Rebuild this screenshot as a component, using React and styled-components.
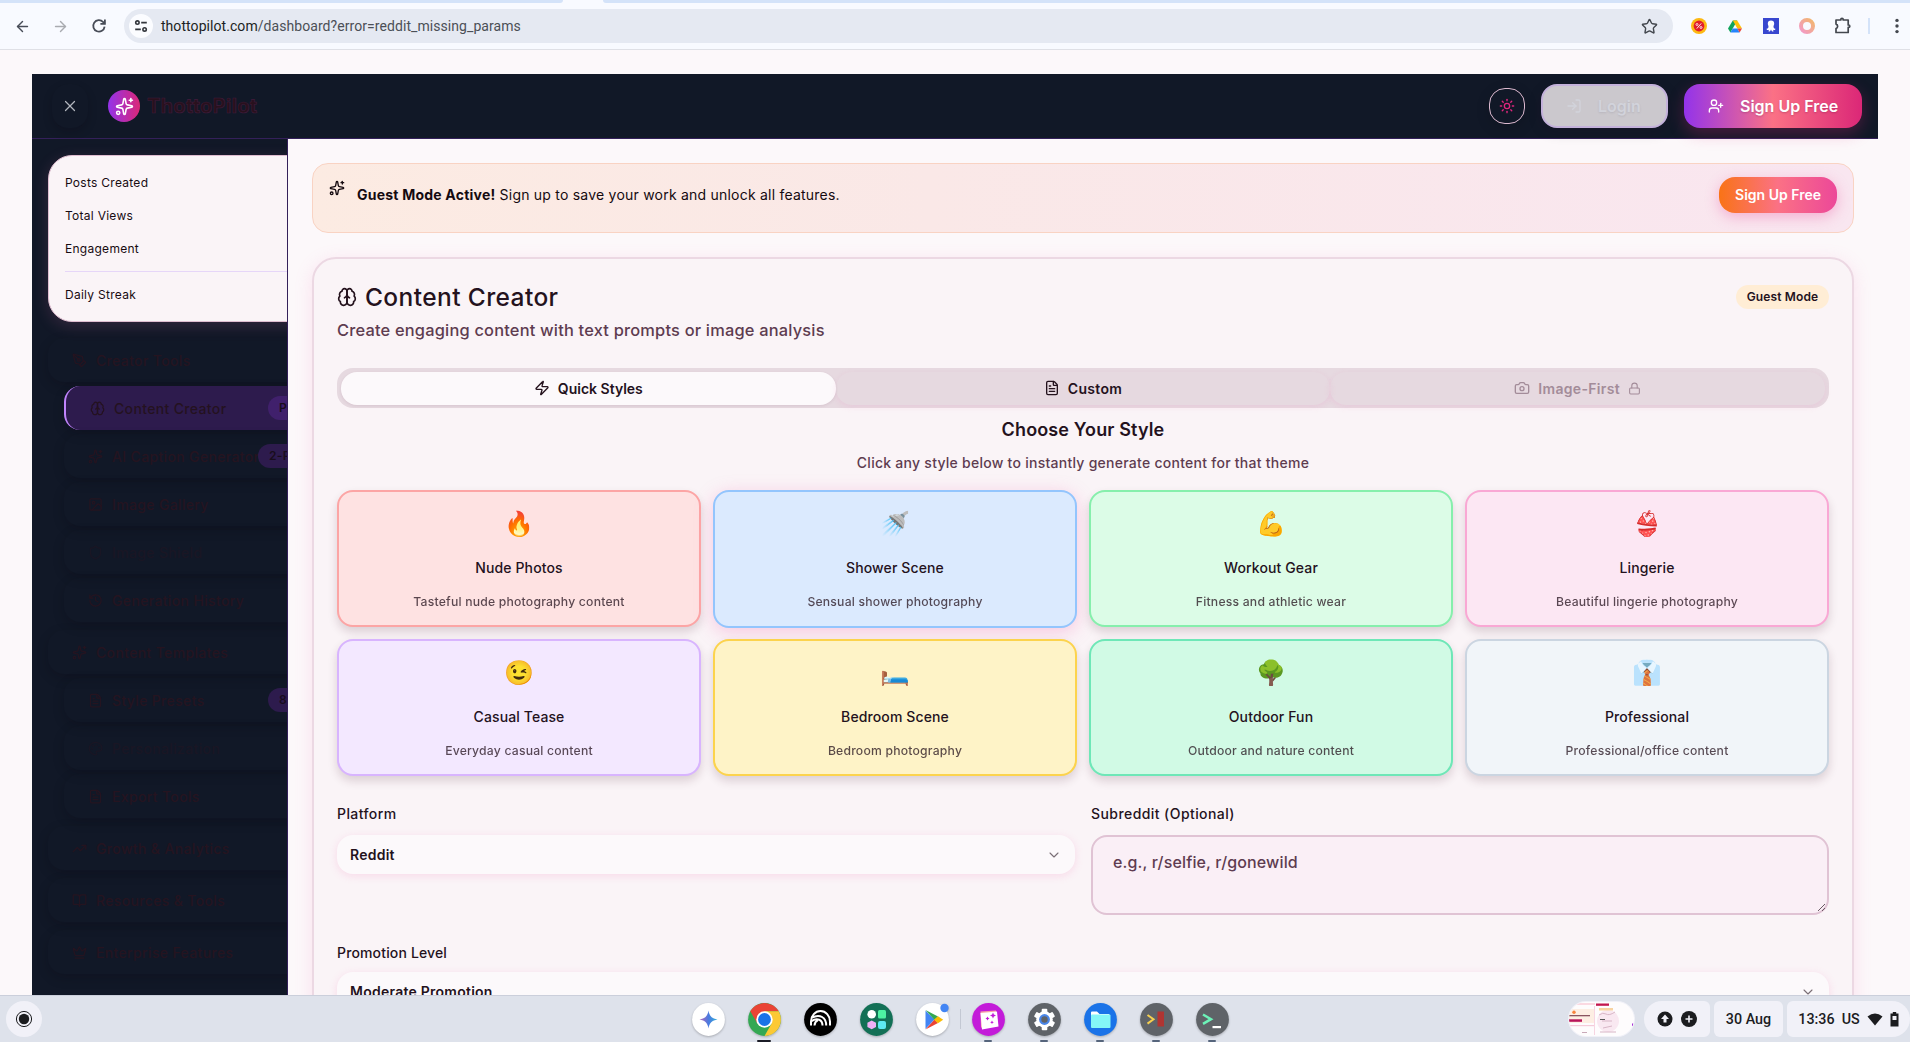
import React from "react";
import styled, { createGlobalStyle, css } from "styled-components";
import {
  ArrowLeft, ArrowRight, Star, X, Sparkles, Sun, LogIn, UserPlus, Zap, FileText,
  Camera, Lock, ChevronDown, PenTool, Image as ImageIcon, Shield, History, Palette,
  TrendingUp, BookOpen, Crown,
} from "lucide-react";

const Global = createGlobalStyle`
  * { box-sizing: border-box; }
  body { margin: 0; background: #fcf8fa; overflow: hidden; }
`;

const ink = "#24121d";
const muted = "#5e3c50";

const Screen = styled.div`
  width: 1910px;
  height: 1042px;
  display: flex;
  flex-direction: column;
  overflow: hidden;
  background: #fcf8fa;
  color: ${ink};
  font-family: Inter, "Noto Sans", sans-serif;
  white-space: nowrap;
`;

/* ---------- browser chrome ---------- */
const TabStrip = styled.div`
  height: 3px;
  flex: none;
  display: flex;
  background: #f8faff;
`;
const StripPiece = styled.div`
  width: ${(p) => p.$w}px;
  background: #d4e3f9;
  border-radius: ${(p) => p.$r};
`;
const StripGap = styled.div`
  width: 40px;
`;
const Toolbar = styled.div`
  height: 47px;
  flex: none;
  display: flex;
  align-items: center;
  padding: 0 4px 0 14px;
  background: #f8faff;
  border-bottom: 1px solid #dfe0e6;
  color: #43474e;
`;
const NavButton = styled.div`
  width: 18px;
  height: 18px;
  margin-right: 20px;
  display: flex;
  align-items: center;
  justify-content: center;
  color: ${(p) => (p.$off ? "#a9abb0" : "#474c57")};
`;
const Omnibox = styled.div`
  width: 1550px;
  height: 34px;
  margin-left: -4px;
  display: flex;
  align-items: center;
  border-radius: 17px;
  background: #e5e9f2;
  padding: 0 15px 0 5px;
  font: 400 14px Roboto, sans-serif;
  letter-spacing: 0.065px;
`;
const SiteChip = styled.div`
  width: 24px;
  height: 24px;
  display: grid;
  place-items: center;
  border-radius: 50%;
  background: #fbfcff;
  margin-right: 8px;
`;
const Host = styled.span`
  color: #1c1e22;
`;
const Path = styled.span`
  flex: 1;
  color: #4b4f56;
`;
const Extensions = styled.div`
  flex: 1;
  display: flex;
  align-items: center;
  padding-left: 17px;
  gap: 18px;
`;
const ExtSlot = styled.div`
  width: 18px;
  height: 18px;
  display: grid;
  place-items: center;
`;
const Separator = styled.div`
  width: 2px;
  height: 16px;
  background: #d4e3f9;
  margin-left: -2px;
`;

/* ---------- application ---------- */
const Viewport = styled.div`
  flex: 1;
  min-height: 0;
  overflow: hidden;
  padding: 24px 32px 0;
  display: flex;
  flex-direction: column;
`;
const Header = styled.header`
  height: 65px;
  flex: none;
  display: flex;
  align-items: center;
  padding: 0 16px 0 20px;
  background: #111827;
  border-bottom: 1px solid #34205a;
`;
const CloseButton = styled.div`
  width: 36px;
  height: 44px;
  border-radius: 16px;
  display: grid;
  place-items: center;
  color: #b2b5bd;
  margin-right: 20px;
  background: #111827;
  box-shadow: 0 4px 10px rgba(10, 6, 16, 0.2);
`;
const LogoDisc = styled.div`
  width: 32px;
  height: 32px;
  border-radius: 50%;
  display: grid;
  place-items: center;
  color: #fff;
  background: linear-gradient(90deg, #9333ea, #db2777);
  margin-right: 7px;
`;
const Brand = styled.div`
  flex: 1;
  font-size: 20px;
  font-weight: 700;
  line-height: 26px;
  letter-spacing: 0.25px;
  color: #28111d;
  -webkit-text-stroke: 0.6px #401b3c;
`;
const ThemeButton = styled.div`
  width: 36px;
  height: 36px;
  border-radius: 16px;
  border: 1px solid #dcb9cf;
  display: grid;
  place-items: center;
  color: #e0267d;
  box-shadow: 0 4px 14px rgba(0, 0, 0, 0.15);
`;
const HeaderButton = styled.div`
  width: ${(p) => p.$w}px;
  height: 44px;
  margin-left: 16px;
  display: flex;
  align-items: center;
  gap: 16px;
  padding: 0 0 1px 24px;
  border-radius: 16px;
  font-size: 16px;
  font-weight: 600;
  ${(p) =>
    p.$primary
      ? css`
          color: #fff;
          background: linear-gradient(90deg, #9333ea, #fb7185 50%, #db2777);
          text-shadow: 0 1px 2px rgba(80, 10, 50, 0.25);
          box-shadow: 0 6px 16px rgba(219, 39, 119, 0.28);
        `
      : css`
          color: #d2d3db;
          background: #cbc8cd;
          border: 2px solid #c3b1da;
          padding-left: 23px;
          text-shadow: 0 1px 2px rgba(90, 90, 110, 0.16);
          box-shadow: 0 4px 14px rgba(40, 10, 40, 0.16);
        `}
`;
const Body = styled.div`
  flex: 1;
  min-height: 0;
  display: flex;
`;
const Sidebar = styled.aside`
  width: 256px;
  flex: none;
  overflow: hidden;
  background: #111827;
  border-right: 1px solid #34205a;
  padding: 16px 0 0 16px;
`;
const StatsCard = styled.div`
  width: 300px;
  height: 167px;
  border: 1px solid #dfbdd0;
  border-radius: 24px;
  background: #faf4f7;
  padding: 11px 16px;
  font-size: 12px;
  color: #180b12;
  letter-spacing: 0.27px;
  box-shadow: 0 4px 16px rgba(236, 120, 180, 0.16);
`;
const Stat = styled.div`
  height: 33px;
  line-height: 31px;
`;
const StatRule = styled.div`
  height: 1px;
  margin: 5px 0 7px;
  background: #e6d6f8;
`;
const Nav = styled.nav`
  width: 300px;
  margin-top: 16px;
  display: flex;
  flex-direction: column;
`;
const Group = styled.div`
  display: flex;
  flex-direction: column;
  gap: 4px;
  margin-bottom: 8px;
`;
const NavRow = styled.div`
  height: 44px;
  display: flex;
  align-items: center;
  gap: 9px;
  margin-left: ${(p) => (p.$child ? 16 : 0)}px;
  padding-left: 24px;
  border-radius: 16px;
  font-size: 14px;
  font-weight: 500;
  letter-spacing: 0.35px;
  color: ${(p) => (p.$dim ? "#1a1624" : "#251420")};
  box-shadow: 0 4px 12px rgba(8, 4, 14, 0.2);
  ${(p) =>
    p.$active &&
    css`
      background: #2d1b4d;
      border-left: 2px solid #c084fc;
      color: #24121f;
    `}
`;
const RowLabel = styled.span`
  width: ${(p) => p.$w}px;
`;
const Pill = styled.span`
  height: 24px;
  line-height: 24px;
  padding: 0 11px;
  border-radius: 12px;
  background: ${(p) => (p.$strong ? "#40206c" : "#2d1b4d")};
  color: #190d1c;
  font-size: 12px;
  font-weight: 600;
`;
const Main = styled.main`
  flex: 1;
  padding: 24px 24px 0;
  display: flex;
  flex-direction: column;
  gap: 24px;
`;
const Banner = styled.section`
  height: 70px;
  flex: none;
  display: flex;
  align-items: flex-start;
  border: 1px solid #f9d3c3;
  border-radius: 16px;
  padding: 13px 16px 0;
  background: linear-gradient(90deg, #fcebe2, #fae8e7 40%, #f9e6f0);
  color: #150a10;
`;
const BannerIcon = styled.div`
  height: 22px;
  display: flex;
  align-items: center;
  margin-right: 12px;
`;
const BannerText = styled.div`
  flex: 1;
  font-size: 14px;
  line-height: 36px;
  letter-spacing: 0.22px;
`;
const BannerButton = styled.div`
  width: 118px;
  height: 36px;
  line-height: 35px;
  text-align: center;
  border-radius: 16px;
  color: #fff;
  font-size: 14px;
  font-weight: 600;
  background: linear-gradient(90deg, #f97316, #fb7185 50%, #ec4899);
  box-shadow: 0 4px 14px rgba(236, 72, 153, 0.35);
`;
const Card = styled.section`
  height: 900px;
  flex: none;
  border: 2px solid #ecd8e3;
  border-radius: 24px;
  background: #faf4f7;
  box-shadow: 0 4px 18px rgba(244, 114, 182, 0.18);
  padding: 23px;
  display: flex;
  flex-direction: column;
`;
const CardTop = styled.div`
  display: flex;
  justify-content: space-between;
  height: 86px;
`;
const TitleLine = styled.div`
  display: flex;
  align-items: center;
  gap: 8px;
  height: 30px;
  font-size: 24.5px;
  letter-spacing: 0.4px;
  font-weight: 500;
`;
const Subtitle = styled.div`
  margin-top: 6px;
  font-size: 16.4px;
  letter-spacing: 0.2px;
  line-height: 24px;
  font-weight: 500;
  color: ${muted};
`;
const GuestBadge = styled.div`
  width: 93px;
  height: 24px;
  line-height: 23px;
  margin-top: 3px;
  border-radius: 12px;
  text-align: center;
  background: #ffedd5;
  font-size: 12px;
  letter-spacing: 0.15px;
  font-weight: 600;
`;
const Tabs = styled.div`
  height: 40px;
  flex: none;
  display: grid;
  grid-template-columns: repeat(3, 1fr);
  padding: 4px 4px 3px;
  border-radius: 16px;
  background: #e6d9e0;
`;
const Tab = styled.div`
  display: flex;
  align-items: center;
  justify-content: center;
  gap: 8px;
  padding-bottom: 1px;
  border-radius: 16px;
  font-size: 14px;
  font-weight: 600;
  letter-spacing: ${(p) => (p.$active ? 0 : 0.32)}px;
  color: ${(p) => (p.$off ? "#a38c99" : ink)};
  background: ${(p) => (p.$active ? "#fcf9fb" : "transparent")};
  box-shadow: ${(p) => (p.$active ? "0 1px 3px rgba(90,30,60,.1)" : "0 2px 6px rgba(244,114,182,.14)")};
`;
const SectionTitle = styled.h3`
  margin: 9px 0 0;
  text-align: center;
  font-size: 18px;
  line-height: 26px;
  letter-spacing: 0.14px;
  font-weight: 600;
`;
const SectionNote = styled.p`
  margin: 10px 0 0;
  text-align: center;
  font-size: 14px;
  line-height: 20px;
  letter-spacing: 0.26px;
  font-weight: 500;
  color: ${muted};
`;
const StyleGrid = styled.div`
  margin-top: 17px;
  display: grid;
  grid-template-columns: repeat(4, 1fr);
  grid-auto-rows: 137px;
  gap: 12px;
`;
const StyleCard = styled.div`
  display: flex;
  flex-direction: column;
  align-items: center;
  height: ${(p) => (p.$glow ? 138 : 137)}px;
  border: 2px solid ${(p) => p.$line};
  background: ${(p) => p.$bg};
  border-radius: 16px;
  padding-top: 16px;
  box-shadow: ${(p) => (p.$glow ? "0 4px 18px rgba(244,114,182,.34)" : "0 5px 10px rgba(60,20,40,.16)")};
`;
const Emoji = styled.div`
  height: 32px;
  line-height: 32px;
  font-size: 24px;
  font-family: "Noto Color Emoji", sans-serif;
`;
const StyleName = styled.div`
  margin-top: 18px;
  font-size: 14px;
  line-height: 20px;
  letter-spacing: 0.12px;
  font-weight: 500;
`;
const StyleNote = styled.div`
  margin-top: 16px;
  font-size: 12.2px;
  line-height: 16px;
  letter-spacing: 0.2px;
  font-weight: 500;
  color: ${ink};
  opacity: 0.75;
`;
const FormRow = styled.div`
  margin-top: 28px;
  display: grid;
  grid-template-columns: ${(p) => (p.$single ? "1fr" : "1fr 1fr")};
  gap: 16px;
`;
const Field = styled.div`
  display: flex;
  flex-direction: column;
  gap: ${(p) => (p.$tight ? 9 : 11)}px;
`;
const Label = styled.div`
  font-size: 14px;
  line-height: 20px;
  letter-spacing: ${(p) => p.$ls}px;
  font-weight: 500;
`;
const Select = styled.div`
  height: 39px;
  display: flex;
  align-items: center;
  justify-content: space-between;
  padding: 0 13px;
  border-radius: 16px;
  background: #fcf9fb;
  font-size: 14px;
  font-weight: 600;
  letter-spacing: 0.25px;
  box-shadow: 0 2px 8px rgba(244, 114, 182, 0.2);
  svg {
    opacity: 0.6;
  }
`;
const TextBox = styled.div`
  height: 80px;
  display: flex;
  justify-content: space-between;
  border: 2px solid #e0c3d4;
  border-radius: 16px;
  background: #faeff6;
  padding: 13px 1px 1px 20px;
  font-size: 16px;
  line-height: 24px;
  letter-spacing: 0.14px;
  font-weight: 500;
  color: ${muted};
`;
const Grip = styled.svg`
  align-self: flex-end;
`;

/* ---------- shelf ---------- */
const Shelf = styled.footer`
  height: 47px;
  flex: none;
  display: flex;
  align-items: center;
  border-top: 1px solid #cbcfdb;
  background: #dee2eb;
  padding-left: 6px;
  font-family: Roboto, sans-serif;
  color: #1b1c1f;
`;
const Launcher = styled.div`
  width: 36px;
  height: 36px;
  border-radius: 50%;
  background: #f1f1f8;
  display: grid;
  place-items: center;
`;
const Apps = styled.div`
  display: flex;
  align-self: stretch;
  margin-left: 638px;
`;
const AppSlot = styled.div`
  width: 56px;
  display: flex;
  flex-direction: column;
  align-items: center;
  padding-top: 7px;
  gap: 4px;
`;
const AppIcon = styled.svg`
  width: 33px;
  height: 33px;
  flex: none;
  filter: drop-shadow(0 1px 1px rgba(0, 0, 0, 0.25));
  overflow: visible;
`;
const Running = styled.div`
  width: ${(p) => p.$w}px;
  height: 2px;
  flex: none;
  border-radius: 1px;
  background: ${(p) => (p.$w > 10 ? "#1b1c26" : "#56657c")};
`;
const ShelfDivider = styled.div`
  width: 1px;
  height: 20px;
  margin: 13px -1px 0 0;
  background: #c3c8d3;
`;
const Tray = styled.div`
  display: flex;
  gap: 4px;
  margin-left: auto;
`;
const TrayPiece = styled.div`
  width: ${(p) => p.$w}px;
  height: 36px;
  display: flex;
  align-items: center;
  justify-content: center;
  gap: ${(p) => p.$gap || 0}px;
  background: #f1f1f8;
  border-radius: ${(p) => p.$r};
  font-size: 14.3px;
  font-weight: 500;
`;
const Thumb = styled.svg`
  width: 67px;
  height: 36px;
  margin-right: 5px;
`;

function Brain({ size, sw = 2 }) {
  return (
    <svg width={size} height={size} viewBox="0 0 24 24" fill="none" stroke="currentColor" strokeWidth={sw} strokeLinecap="round" strokeLinejoin="round">
      <path d="M12 5a3 3 0 1 0-5.997.125 4 4 0 0 0-2.526 5.77 4 4 0 0 0 .556 6.588A4 4 0 1 0 12 18Z" />
      <path d="M12 5a3 3 0 1 1 5.997.125 4 4 0 0 1 2.526 5.77 4 4 0 0 1-.556 6.588A4 4 0 1 1 12 18Z" />
      <path d="M15 13a4.5 4.5 0 0 1-3-4 4.5 4.5 0 0 1-3 4" />
    </svg>
  );
}

const groups = [
  { icon: PenTool, label: "Creator Tools", items: [
    { icon: Brain, label: "Content Creator", active: true, pill: "Popular", w: 145 },
    { icon: Sparkles, label: "AI Caption Generator", pill: "2-Pass", w: 137 },
    { icon: ImageIcon, label: "Image Gallery" },
    { icon: Shield, label: "Image Shield", dim: true },
    { icon: History, label: "Generation History" },
  ] },
  { icon: Sparkles, label: "Content Templates", items: [
    { icon: FileText, label: "Style Presets", pill: "8", w: 147 },
    { icon: Palette, label: "Personalization", dim: true },
    { icon: FileText, label: "Export Tools" },
  ] },
  { icon: TrendingUp, label: "Growth & Analytics", items: [] },
  { icon: BookOpen, label: "Resources & Tools", items: [] },
  { icon: Crown, label: "Enterprise Features", items: [] },
];

const styles = [
  ["🔥", "Nude Photos", "Tasteful nude photography content", "#fee2e2", "#fca5a5"],
  ["🚿", "Shower Scene", "Sensual shower photography", "#dbeafe", "#93c5fd"],
  ["💪", "Workout Gear", "Fitness and athletic wear", "#dcfce7", "#86efac"],
  ["👙", "Lingerie", "Beautiful lingerie photography", "#fce7f3", "#f9a8d4"],
  ["😉", "Casual Tease", "Everyday casual content", "#f3e8ff", "#d8b4fe"],
  ["🛏️", "Bedroom Scene", "Bedroom photography", "#fef3c7", "#fcd34d"],
  ["🌳", "Outdoor Fun", "Outdoor and nature content", "#d1fae5", "#6ee7b7"],
  ["👔", "Professional", "Professional/office content", "#f1f5f9", "#cbd5e1"],
];

function NavGroup({ group }) {
  const Icon = group.icon;
  return (
    <Group>
      <NavRow>
        <Icon size={15} />
        <RowLabel>{group.label}</RowLabel>
      </NavRow>
      {group.items.map((item) => {
        const ItemIcon = item.icon;
        return (
          <NavRow key={item.label} $child $active={item.active} $dim={item.dim}>
            <ItemIcon size={15} />
            <RowLabel $w={item.w}>{item.label}</RowLabel>
            {item.pill && <Pill $strong={item.active}>{item.pill}</Pill>}
          </NavRow>
        );
      })}
    </Group>
  );
}

function Browser() {
  return (
    <>
      <TabStrip>
        <StripPiece $w={563} $r="0 0 4px 0" />
        <StripGap />
        <StripPiece $w={1307} $r="0 0 0 4px" />
      </TabStrip>
      <Toolbar>
        <NavButton><ArrowLeft size={17} /></NavButton>
        <NavButton $off><ArrowRight size={17} /></NavButton>
        <NavButton>
          <svg width="16" height="16" viewBox="0 0 16 16" fill="none" stroke="currentColor" strokeWidth="1.8">
            <path d="M13.6 8.6a5.7 5.7 0 1 1-1.5-4.6l1.6 1.6" />
            <path d="M13.9 1.4v4.4H9.4" />
          </svg>
        </NavButton>
        <Omnibox>
          <SiteChip>
            <svg width="14" height="14" viewBox="0 0 14 14" fill="none" stroke="#33363c" strokeWidth="1.6">
              <circle cx="3.4" cy="3.6" r="1.7" /><path d="M7.2 3.6h5.6M1.2 10.4h5.6" /><circle cx="10.6" cy="10.4" r="1.7" />
            </svg>
          </SiteChip>
          <Host>thottopilot.com</Host>
          <Path>/dashboard?error=reddit_missing_params</Path>
          <Star size={17} strokeWidth={2} strokeLinejoin="miter" />
        </Omnibox>
        <Extensions>
          <ExtSlot>
            <svg width="16" height="16" viewBox="0 0 16 16">
              <circle cx="8" cy="8" r="8" fill="#fdb913" /><circle cx="8" cy="8" r="5.4" fill="#e11d2a" />
              <path d="M10.2 5.400 5.800 10.600" stroke="#fff" strokeWidth="0.9" />
              <circle cx="6" cy="6.500" r="1" fill="none" stroke="#fff" strokeWidth=".8" /><circle cx="10" cy="9.500" r="1" fill="none" stroke="#fff" strokeWidth=".8" />
            </svg>
          </ExtSlot>
          <ExtSlot>
            <svg width="14" height="13" viewBox="0 0 14 13">
              <path d="M4.8.4h4.4L7 4.5 2.4 12.4 0 8.6z" fill="#11a45b" />
              <path d="M4.8.4h4.4L14 8.6H9.4z" fill="#ffc107" />
              <path d="M4.7 8.6H9.4l2.2 4H2.4z" fill="#2684fc" />
              <path d="M9.4 8.6H14l-2.4 4z" fill="#ea4335" />
            </svg>
          </ExtSlot>
          <ExtSlot>
            <svg width="16" height="16" viewBox="0 0 16 16">
              <path d="M0 0h16v16H0z" fill="#3847cf" />
              <path d="M8 2.600a3.200 3.200 0 0 1 3.200 3.200c0 1.200-.8 2-.7 3.200.2 1.300 1 1.700 2 1.800-.1 1.300-1.300 1.500-2.400 1l.4 1.700c-1 .3-1.700-.2-2-1.100L8 11.600l-.5.8c-.3.9-1 1.400-2 1.100l.4-1.700c-1.100.5-2.300.3-2.400-1 1-.1 1.800-.5 2-1.800.1-1.200-.7-2-.7-3.200A3.200 3.200 0 0 1 8 2.600z" fill="#fff" />
            </svg>
          </ExtSlot>
          <ExtSlot>
            <svg width="16" height="16" viewBox="0 0 16 16">
              <defs><linearGradient id="ring" x1="1" y1="0" x2="0" y2="1"><stop offset="0" stopColor="#f2b66e" /><stop offset="1" stopColor="#f39ac8" /></linearGradient></defs>
              <circle cx="8" cy="8" r="6" fill="none" stroke="url(#ring)" strokeWidth="4" />
            </svg>
          </ExtSlot>
          <ExtSlot>
            <svg width="18" height="18" viewBox="0 0 18 18" fill="none" stroke="#43474e" strokeWidth="1.7" strokeLinejoin="round">
              <path d="M2 3h4.800v-.4a1.200 1.200 0 0 1 2.400 0V3h5v5h.4a1.200 1.200 0 0 1 0 2.400h-.4v5.100H2v-4a2.300 2.300 0 0 0 0-4.400z" />
            </svg>
          </ExtSlot>
          <Separator />
          <ExtSlot>
            <svg width="4" height="16" viewBox="0 0 4 16" fill="#43474e"><circle cx="2" cy="2.4" r="1.7" /><circle cx="2" cy="8" r="1.7" /><circle cx="2" cy="13.6" r="1.7" /></svg>
          </ExtSlot>
        </Extensions>
      </Toolbar>
    </>
  );
}

function Gear() {
  const teeth = [0, 60, 120, 180, 240, 300];
  return (
    <g>
      {teeth.map((a) => (
        <rect key={a} x="13.7" y="5.800" width="5.600" height="6" rx="1" fill="#fff" transform={`rotate(${a} 16.5 16.5)`} />
      ))}
      <circle cx="16.5" cy="16.5" r="8.3" fill="#fff" />
      <circle cx="16.5" cy="16.5" r="5.4" fill="#4a86e8" />
      <circle cx="16.5" cy="16.5" r="3.2" fill="#5f6368" />
    </g>
  );
}

function ShelfBar() {
  return (
    <Shelf>
      <Launcher>
        <svg width="18" height="18" viewBox="0 0 18 18"><circle cx="9" cy="9" r="7.6" fill="none" stroke="#1b1c1f" strokeWidth="1" /><circle cx="9" cy="9" r="5.2" fill="#1b1c1f" /></svg>
      </Launcher>
      <Apps>
        <AppSlot>
          <AppIcon viewBox="0 0 33 33">
            <defs><linearGradient id="gem"><stop offset="0" stopColor="#b668b8" /><stop offset=".5" stopColor="#4b7be0" /><stop offset="1" stopColor="#35b0d8" /></linearGradient></defs>
            <circle cx="16.5" cy="16.5" r="16.4" fill="#fff" />
            <path d="M16.5 7.500c.8 5.500 3.500 8.200 9 9-5.500.8-8.200 3.500-9 9-.8-5.500-3.500-8.200-9-9 5.500-.8 8.200-3.500 9-9z" fill="url(#gem)" />
          </AppIcon>
        </AppSlot>
        <AppSlot>
          <AppIcon viewBox="0 0 33 33">
            <circle cx="16.5" cy="16.5" r="16.4" fill="#34a853" />
            <path d="M2.300 8.300A16.400 16.400 0 0 1 30.700 8.300L16.500 8.300 9.400 20.600z" fill="#ea4335" />
            <path d="M16.5 8.300H30.700A16.400 16.400 0 0 1 16.500 32.900L23.600 20.600z" fill="#fcc934" />
            <circle cx="16.5" cy="16.5" r="8.2" fill="#fff" /><circle cx="16.5" cy="16.5" r="6.4" fill="#1a73e8" />
          </AppIcon>
          <Running $w={14} />
        </AppSlot>
        <AppSlot>
          <AppIcon viewBox="0 0 33 33">
            <circle cx="16.5" cy="16.5" r="16.4" fill="#000" />
            <g fill="none" stroke="#fff" strokeWidth="2">
              <path d="M7 22.500v-4a9.500 10.500 0 0 1 19 0v4" />
              <path d="M8 14.500c8-4 14.200 0 14.200 8" />
              <path d="M7 18.500c6.500-4.500 11.500-1.500 11.500 4" />
              <path d="M10.500 22.500c.2-3 1.200-4.500 3.500-5.500" />
            </g>
          </AppIcon>
        </AppSlot>
        <AppSlot>
          <AppIcon viewBox="0 0 33 33">
            <circle cx="16.5" cy="16.5" r="16.4" fill="#137056" />
            <circle cx="11.7" cy="11.3" r="4.3" fill="#fff" /><rect x="18" y="7" width="8" height="8.500" rx="1.500" fill="#4df2a2" />
            <path d="m11.700 17.500 4.300 2.200v4.400l-4.300 2.200-4.300-2.200v-4.400z" fill="#f0b0f5" /><rect x="18" y="18" width="8" height="8" rx="2" fill="#5ceaf0" />
          </AppIcon>
        </AppSlot>
        <AppSlot>
          <AppIcon viewBox="0 0 33 33">
            <circle cx="16.5" cy="16.5" r="16.4" fill="#fff" />
            <path d="M9.500 7.500 18.500 16.500 9.500 26z" fill="#4285f4" /><path d="M9.500 7 22 13.500 18.500 17z" fill="#34a853" />
            <path d="M9.500 26.500 22 20l-3.500-3.500z" fill="#ea4335" /><path d="M22 13.300 27.200 16.700 22 20.200 18 16.700z" fill="#fbbc04" />
            <circle cx="28.500" cy="5" r="4.200" fill="#4285f4" />
          </AppIcon>
        </AppSlot>
        <ShelfDivider />
        <AppSlot>
          <AppIcon viewBox="0 0 33 33">
            <circle cx="16.5" cy="16.5" r="16.4" fill="#c31bd9" />
            <path d="M8.500 8.500 24 7.500v16l-15 1z" fill="#f7a3a8" /><path d="M8.500 10 25 8.500 26.500 23.500 10 26.500z" fill="#fff" />
            <path d="M21 9.500l.9 2.100 2.100.9-2.100.9-.9 2.100-.9-2.100-2.100-.9 2.100-.9zM15.500 13.500l.7 1.300 1.300.7-1.300.7-.7 1.300-.7-1.300-1.300-.7 1.300-.7zM20 17.500l.6 1.200 1.200.6-1.200.6-.6 1.200-.6-1.200-1.200-.6 1.200-.6z" fill="#c31bd9" />
          </AppIcon>
          <Running $w={8} />
        </AppSlot>
        <AppSlot>
          <AppIcon viewBox="0 0 33 33"><circle cx="16.5" cy="16.5" r="16.4" fill="#5f6368" /><Gear /></AppIcon>
          <Running $w={8} />
        </AppSlot>
        <AppSlot>
          <AppIcon viewBox="0 0 33 33">
            <circle cx="16.5" cy="16.5" r="16.4" fill="#1a73e8" />
            <path d="M7 9.500q0-1 1-1h5l2.500 2.500h9q1 0 1 1v5H7z" fill="#fff" /><rect x="7" y="11.500" width="19.500" height="13.500" rx="1" fill="#84f7f7" />
          </AppIcon>
          <Running $w={8} />
        </AppSlot>
        <AppSlot>
          <AppIcon viewBox="0 0 33 33">
            <circle cx="16.5" cy="16.5" r="16.4" fill="#5f6368" />
            <path d="m7.500 12 6 4.300-6 4.300" fill="none" stroke="#f5cf4f" strokeWidth="2" /><rect x="17.500" y="8.500" width="6.500" height="15" fill="#b03532" />
          </AppIcon>
          <Running $w={8} />
        </AppSlot>
        <AppSlot>
          <AppIcon viewBox="0 0 33 33">
            <circle cx="16.5" cy="16.5" r="16.4" fill="#5f6368" />
            <path d="m7 11.500 8 4.700-8 4.700" fill="none" stroke="#6df2b8" strokeWidth="2.500" /><rect x="16.5" y="23" width="8.500" height="2.200" fill="#fff" />
          </AppIcon>
          <Running $w={8} />
        </AppSlot>
      </Apps>
      <Tray>
        <Thumb viewBox="0 0 67 36">
          <defs><clipPath id="thumb"><rect x="1" y="1" width="65" height="34" rx="17" /></clipPath></defs>
          <rect width="67" height="36" rx="18" fill="#f1f1f8" />
          <g clipPath="url(#thumb)">
            <rect width="67" height="36" fill="#fefcfd" />
            <rect x="0" y="2" width="27" height="2" fill="#fbd9e2" /><rect x="0" y="8" width="26" height="14" fill="#fdeee3" />
            <circle cx="6" cy="11.3" r="1.700" fill="#f9833c" /><rect x="1" y="14" width="21" height="1.300" fill="#8a5560" />
            <rect x="1" y="18.300" width="13" height="2.500" fill="#b8145a" /><rect x="0" y="24" width="27" height="1.200" fill="#f5cbd9" />
            <rect x="26" y="5" width="1" height="29" fill="#f7d5e2" /><rect x="14" y="31" width="5" height="1" fill="#c9a9b8" />
            <rect x="28" y="2.500" width="13" height="2.300" fill="#c3164f" /><circle cx="40" cy="20" r="11" fill="#f9e8f1" />
            <rect x="31" y="7" width="14" height="2.500" fill="#f8d3a2" />
            <path d="M31 14q4-3 7-1t9-2M34 20h10M35 27l9-2M32 31h16" fill="none" stroke="#d8b5c6" strokeWidth="1" />
            <path d="M32 18.500h5" stroke="#555" strokeWidth="1.200" /><rect x="64" y="22.500" width="1.500" height="2.500" fill="#a226d6" />
          </g>
        </Thumb>
        <TrayPiece $w={66} $r="18px 6px 6px 18px" $gap={8}>
          <svg width="16" height="16" viewBox="0 0 16 16"><circle cx="8" cy="8" r="7.5" fill="#1b1c1f" /><path d="M8 3.500 12 8H9.500v3.500h-3V8H4z" fill="#f1f1f8" /></svg>
          <svg width="16" height="16" viewBox="0 0 16 16"><circle cx="8" cy="8" r="8" fill="#1b1c1f" /><path d="M8 4.500v7M4.500 8h7" stroke="#f1f1f8" strokeWidth="1.600" /></svg>
        </TrayPiece>
        <TrayPiece $w={69} $r="6px">30 Aug</TrayPiece>
        <TrayPiece $w={123} $r="6px 18px 18px 6px" $gap={7}>
          <span>13:36</span>
          <span>US</span>
          <svg width="16" height="13" viewBox="0 0 16 13"><path d="M8 12.500.5 3.500Q8-2.500 15.500 3.500z" fill="#1b1c1f" /></svg>
          <svg width="9" height="15" viewBox="0 0 9 15"><path d="M2.800 0h3.400v1.600H8.500V14.500H.5V1.600h2.300z" fill="#1b1c1f" /><rect x="2.500" y="4" width="4" height="4" fill="#f1f1f8" /></svg>
        </TrayPiece>
      </Tray>
    </Shelf>
  );
}

export default function App() {
  return (
    <Screen>
      <Global />
      <Browser />
      <Viewport>
        <Header>
          <CloseButton><X size={18} strokeWidth={1.6} /></CloseButton>
          <LogoDisc><Sparkles size={19} /></LogoDisc>
          <Brand>ThottoPilot</Brand>
          <ThemeButton><Sun size={16} /></ThemeButton>
          <HeaderButton $w={127}><LogIn size={16} /><span>Login</span></HeaderButton>
          <HeaderButton $w={178} $primary><UserPlus size={16} /><span>Sign Up Free</span></HeaderButton>
        </Header>
        <Body>
          <Sidebar>
            <StatsCard>
              <Stat>Posts Created</Stat>
              <Stat>Total Views</Stat>
              <Stat>Engagement</Stat>
              <StatRule />
              <Stat>Daily Streak</Stat>
            </StatsCard>
            <Nav>
              {groups.map((g) => <NavGroup key={g.label} group={g} />)}
            </Nav>
          </Sidebar>
          <Main>
            <Banner>
              <BannerIcon><Sparkles size={16} /></BannerIcon>
              <BannerText><b>Guest Mode Active!</b> Sign up to save your work and unlock all features.</BannerText>
              <BannerButton>Sign Up Free</BannerButton>
            </Banner>
            <Card>
              <CardTop>
                <div>
                  <TitleLine><Brain size={20} />Content Creator</TitleLine>
                  <Subtitle>Create engaging content with text prompts or image analysis</Subtitle>
                </div>
                <GuestBadge>Guest Mode</GuestBadge>
              </CardTop>
              <Tabs>
                <Tab $active><Zap size={16} />Quick Styles</Tab>
                <Tab><FileText size={16} />Custom</Tab>
                <Tab $off><Camera size={16} />Image-First<Lock size={13} /></Tab>
              </Tabs>
              <SectionTitle>Choose Your Style</SectionTitle>
              <SectionNote>Click any style below to instantly generate content for that theme</SectionNote>
              <StyleGrid>
                {styles.map(([emoji, name, note, bg, line], i) => (
                  <StyleCard key={name} $bg={bg} $line={line} $glow={i === 1}>
                    <Emoji>{emoji}</Emoji>
                    <StyleName>{name}</StyleName>
                    <StyleNote>{note}</StyleNote>
                  </StyleCard>
                ))}
              </StyleGrid>
              <FormRow>
                <Field>
                  <Label $ls={0.4}>Platform</Label>
                  <Select>Reddit<ChevronDown size={16} strokeWidth={1.6} /></Select>
                </Field>
                <Field>
                  <Label $ls={0.43}>Subreddit (Optional)</Label>
                  <TextBox>
                    e.g., r/selfie, r/gonewild
                    <Grip width="9" height="9" viewBox="0 0 9 9" stroke="#6b5a64" strokeWidth="1"><path d="M1 8 8 1M5 8l3-3" /></Grip>
                  </TextBox>
                </Field>
              </FormRow>
              <FormRow $single>
                <Field $tight>
                  <Label $ls={0.15}>Promotion Level</Label>
                  <Select>Moderate Promotion<ChevronDown size={16} strokeWidth={1.6} /></Select>
                </Field>
              </FormRow>
            </Card>
          </Main>
        </Body>
      </Viewport>
      <ShelfBar />
    </Screen>
  );
}
